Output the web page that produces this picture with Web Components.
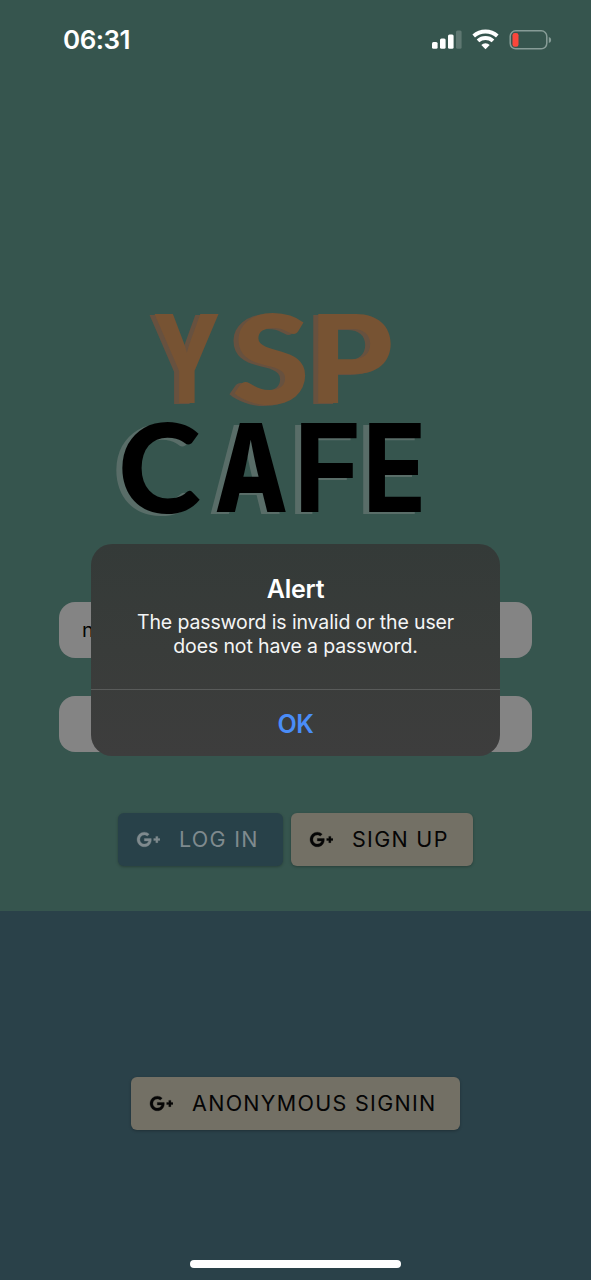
<!DOCTYPE html>
<html lang="en">
<head>
<meta charset="utf-8">
<title>YSP Cafe</title>
<style>
html,body{margin:0;height:100%;background:#2a4149;overflow:hidden}
</style>
</head>
<body>
<cafe-app></cafe-app>
<script>
const define = (name, html, after) => customElements.define(name, class extends HTMLElement {
  connectedCallback() {
    if (this.shadowRoot) return;
    this.attachShadow({mode: 'open'}).innerHTML = html;
    if (after) after(this);
  }
});

define('status-bar', `
<style>
:host{display:flex;align-items:center;justify-content:space-between;height:80px;box-sizing:border-box;padding:0 39px 0 63px;color:#fff}
time{font-size:26px;font-weight:600;line-height:32px;letter-spacing:-.5px}
div{display:flex;align-items:center}
svg{display:block}
</style>
<time>06:31</time>
<div>
<svg width="120" height="24" viewBox="0 0 120 24" fill="#fff">
<rect x="0" y="14" width="5.600" height="6.800" rx="1.500"/><rect x="8" y="10.500" width="5.600" height="10.300" rx="1.500"/><rect x="16" y="6.500" width="5.600" height="14.300" rx="1.500"/><rect x="24" y="2.500" width="5.600" height="18.300" rx="1.500" opacity=".2"/>
<g fill="none" stroke="#fff" stroke-width="3.900"><path d="M41.700 8.050A17.700 17.700 0 0 1 65.300 8.050"/><path d="M46 12.900A11.200 11.200 0 0 1 61 12.900"/></g>
<path d="M49.300 16.900A5.900 5.900 0 0 1 57.700 16.900L53.500 21.200Z"/>
<rect x="78.200" y="2.800" width="36.600" height="18" rx="5.500" fill="none" stroke="#879c97" stroke-width="1.500"/>
<rect x="80.500" y="5" width="6" height="13.800" rx="2.300" fill="#fb463b"/>
<path d="M116.800 9Q119.200 9.600 119.200 12T116.800 15Z" fill="#879c97"/>
</svg></div>`);

define('logo-word', `
<style>
:host{display:flex;height:89px;color:var(--ink)}
span{display:block;flex:none}
b{display:block;width:max-content;font-size:124px;line-height:1;transform-origin:0 0}
</style>`, el => {
  // Each letter is fitted to its own box: "letter:left margin:width:overshoot:font weight:font"
  const ctx = document.createElement('canvas').getContext('2d');
  const size = 124;
  const [dx, dy] = el.getAttribute('shadow').split(' ').map(Number);
  for (const item of el.getAttribute('letters').split(' ')) {
    const [ch, gap, w, over, weight, family] = item.split(':');
    ctx.font = `${weight} ${size}px ${family}`;
    const m = ctx.measureText(ch);
    const inkW = m.actualBoundingBoxLeft + m.actualBoundingBoxRight;
    const inkH = m.actualBoundingBoxAscent + m.actualBoundingBoxDescent;
    const base = (size + m.fontBoundingBoxAscent - m.fontBoundingBoxDescent) / 2;
    const sx = w / inkW, sy = (89 + 2 * over) / inkH;
    const x = m.actualBoundingBoxLeft;
    const y = m.actualBoundingBoxAscent - base;
    const s = document.createElement('span'), b = document.createElement('b');
    s.style.cssText = `margin-left:${gap}px;width:${w}px`;
    b.style.cssText = `font-family:${family},sans-serif;font-weight:${weight};transform:translateY(${-over}px) scale(${sx},${sy}) translate(${x}px,${y}px);text-shadow:${dx / sx}px ${dy / sy}px var(--shade)`;
    b.textContent = ch;
    s.append(b);
    el.shadowRoot.append(s);
  }
});

define('text-field', `
<style>:host{display:flex;align-items:center;height:56px;box-sizing:border-box;padding-left:23px;border-radius:16px;background:#848484;color:#050505;font-size:20px}</style><slot></slot>`);

define('google-button', `
<style>
:host{display:flex;align-items:center;height:53px;box-sizing:border-box;padding:0 0 1px 18px;border-radius:6px;background:#737065;color:#050505;font-size:21.500px;font-weight:400;letter-spacing:1.300px;white-space:nowrap;box-shadow:0 1px 3px #0004}
:host([primary]){background:#284149;color:#7f8a8e}
svg{width:25px;height:25px;margin-right:18px;flex:none}
</style>
<svg viewBox="0 0 24 24" fill="currentColor" stroke="currentColor" stroke-width=".3"><path d="M23 11H21V9H19V11H17V13H19V15H21V13H23M8 11V13.400H12C11.800 14.400 10.800 16.400 8 16.400C5.600 16.400 3.700 14.400 3.700 12S5.600 7.600 8 7.600C9.400 7.600 10.300 8.200 10.800 8.700L12.700 6.900C11.500 5.700 9.900 5 8 5C4.100 5 1 8.100 1 12S4.100 19 8 19C12 19 14.700 16.200 14.700 12.200C14.700 11.700 14.700 11.400 14.600 11H8Z"/></svg><slot></slot>`);

define('alert-dialog', `
<style>
:host{display:flex;flex-direction:column;width:409px;height:212px;box-sizing:border-box;border-radius:21px;background:linear-gradient(#343a38,#393c3a 50%,#3d3d3d);text-align:center;overflow:hidden}
section{height:146px;padding-top:29px;box-sizing:border-box;border-bottom:1px solid #595b5a}
h1{margin:0;font-size:25px;line-height:32px;font-weight:600;letter-spacing:-.2px;color:#fff}
p{margin:5px 0 0;font-size:19.500px;line-height:24px;letter-spacing:-.120px;color:#f4f5f5}
button{flex:1;border:0;padding:2px 0 0;background:none;color:#4a8df8;font:600 25px/1 Inter,sans-serif;letter-spacing:-.4px}
</style>
<section><h1>Alert</h1><p><slot></slot></p></section><button>OK</button>`);

define('cafe-app', `
<style>
:host{display:flex;flex-direction:column;position:relative;width:591px;height:1280px;background:#2a4149;font-family:Inter,"Liberation Sans",sans-serif;overflow:hidden}
main{height:911px;background:#36554e;display:flex;flex-direction:column}
.logo{padding-top:234px;height:288px}
.ysp{--ink:#775333;--shade:#67513f;padding-left:154px}
.cafe{--ink:#000;--shade:#596d68;padding-left:122px;margin-top:20px}
.fields{display:grid;gap:38px;padding:0 59px}
.actions{display:flex;gap:8px;padding:61px 0 0 118px}
footer{flex:1;display:flex;flex-direction:column;align-items:center;justify-content:space-between;padding:166px 0 12px}
i{display:block;width:211px;height:8px;border-radius:4px;background:#fff}
alert-dialog{position:absolute;left:91px;top:544px}
</style>
<main>
<status-bar></status-bar>
<div class="logo">
<logo-word class="ysp" shadow="-5 1" letters="Y:0:65:0:800:Inter S:15:72:1.5:900:Lato P:12:73:0:700:Inter"></logo-word>
<logo-word class="cafe" shadow="-6 2" letters="C:0:78:1.5:900:Lato A:16:70:0:800:Inter F:15:56:0:700:Inter E:12:52:0:700:Inter"></logo-word>
</div>
<div class="fields"><text-field>n</text-field><text-field></text-field></div>
<div class="actions"><google-button primary style="width:165px">LOG IN</google-button><google-button style="width:182px">SIGN UP</google-button></div>
</main>
<footer><google-button style="width:329px">ANONYMOUS SIGNIN</google-button><i></i></footer>
<alert-dialog>The password is invalid or the user<br>does not have a password.</alert-dialog>`);
</script>
</body>
</html>
